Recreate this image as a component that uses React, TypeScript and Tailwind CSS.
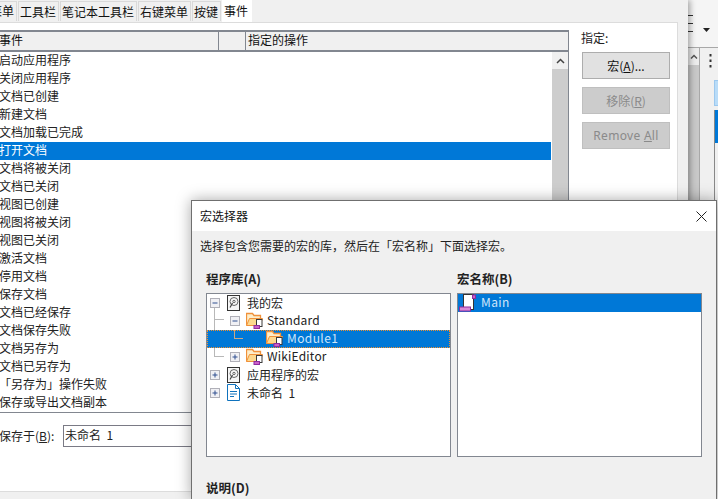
import React from 'react'

const font = "font-['Noto_Sans_CJK_SC','Noto_Sans',sans-serif]"

const events = [
  '启动应用程序',
  '关闭应用程序',
  '文档已创建',
  '新建文档',
  '文档加载已完成',
  '打开文档',
  '文档将被关闭',
  '文档已关闭',
  '视图已创建',
  '视图将被关闭',
  '视图已关闭',
  '激活文档',
  '停用文档',
  '保存文档',
  '文档已经保存',
  '文档保存失败',
  '文档另存为',
  '文档已另存为',
  '「另存为」操作失败',
  '保存或导出文档副本',
]

const Expander = ({ open }: { open: boolean }) => (
  <svg width="10" height="10" viewBox="0 0 10 10" className="shrink-0">
    <rect x="0.5" y="0.5" width="9" height="9" fill="#f0f0f4" stroke="#b0b0b8" />
    <path d={open ? 'M2.500 5h5' : 'M2.500 5h5M5 2.500v5'} stroke="#2f4f8f" />
  </svg>
)

const DiskIcon = () => (
  <svg width="13" height="16" viewBox="0 0 13 16" className="shrink-0">
    <rect x="0.5" y="0.5" width="12" height="15" fill="#f6f6f6" stroke="#333" />
    <circle cx="7" cy="6.500" r="4" fill="none" stroke="#666" />
    <circle cx="7" cy="6.500" r="1.200" fill="none" stroke="#666" />
    <path d="M5.500 8 3 12.500" stroke="#444" strokeWidth="1.200" />
  </svg>
)

const DocIcon = () => (
  <svg width="13" height="17" viewBox="0 0 13 17" className="shrink-0">
    <path d="M.5.5h8l4 4v12H.5z" fill="#fff" stroke="#0f72bd" />
    <path d="M8.500.5V4.500h4" fill="none" stroke="#0f72bd" />
    <path d="M3 7.500h7M3 10h7M3 12.500h4" stroke="#0f72bd" />
  </svg>
)

const FolderIcon = () => (
  <svg width="17" height="17" viewBox="0 0 17 17" className="shrink-0">
    <path d="M.5 13.500V1.500h6l1.500 2h6.500v3" fill="#fdeecb" stroke="#f0913a" strokeWidth="1.300" />
    <path d="M.5 13.500 3.500 6.500h13l-2.500 7z" fill="#fdd98f" stroke="#f0913a" />
    <rect x="10.500" y="7.500" width="5.500" height="7" fill="#fff" stroke="#3a3a3a" />
    <rect x="8" y="13.500" width="5.500" height="3" fill="#c95fc9" stroke="#8e2c9e" />
  </svg>
)

const ScrollIcon = () => (
  <svg width="17" height="18" viewBox="0 0 17 18" className="shrink-0">
    <rect x="4.500" y="0.500" width="10" height="15" fill="#fff" stroke="#333" />
    <rect x="13.500" y="1" width="3" height="3.500" fill="#c95fc9" stroke="#8e2c9e" />
    <rect x="0.500" y="13" width="11" height="4" fill="#d78ad7" stroke="#8e2c9e" />
  </svg>
)

const TabItem = ({ label }: { label: string }) => (
  <div className="h-[20px] mt-[1px] pl-[1px] pr-[2px] bg-[#f0f0f0] border border-[#d9d9d9] border-b-0 text-[12px] leading-[19px] text-[#111] whitespace-nowrap">
    {label}
  </div>
)

const ActionButton = ({ children, disabled }: { children: React.ReactNode; disabled?: boolean }) => (
  <div
    className={
      disabled
        ? 'w-[88px] h-[27px] flex items-center justify-center border border-[#bfbfbf] bg-[#cccccc] text-[12px] text-[#8a8a8a]'
        : 'w-[88px] h-[27px] flex items-center justify-center border border-[#adadad] bg-[#e1e1e1] text-[12px] text-[#111]'
    }
  >
    {children}
  </div>
)

export default function App() {
  return (
    <div className={`relative w-[718px] h-[499px] overflow-hidden bg-[#f0f0f0] ${font}`}>
      <div className="flex h-full">
        {/* customize window behind */}
        <div className="relative z-10 w-[688px] h-full shrink-0 bg-[#f0f0f0] shadow-[2px_0_6px_rgba(0,0,0,0.35)] flex flex-col">
          <div className="h-[22px] flex items-start gap-[1px] shrink-0 overflow-hidden">
            <div className="h-[20px] mt-[1px] w-[17px] overflow-hidden bg-[#f0f0f0] border-r border-t border-[#d9d9d9] text-[12px] leading-[18px] flex justify-end pr-[2px] text-[#111] shrink-0">
              <span className="shrink-0">菜单</span>
            </div>
            <TabItem label="工具栏" />
            <TabItem label="笔记本工具栏" />
            <TabItem label="右键菜单" />
            <TabItem label="按键" />
            <div className="h-[22px] pl-[2px] pr-[4px] bg-white text-[12px] leading-[21px] text-[#111] whitespace-nowrap">事件</div>
          </div>
          <div className="w-[678px] h-[470px] bg-white border-t border-r border-b border-[#dcdcdc] flex shrink-0">
            <div className="w-[569px] shrink-0 pt-[7px] flex flex-col">
              <div className="h-[22px] border-t-2 border-b-2 border-r border-[#828790] bg-[#f0f0f0] flex text-[12px] leading-[16px] text-[#111] shrink-0 overflow-hidden">
                <div className="w-[219px] shrink-0 border-r border-[#828790] -indent-[1px]">事件</div>
                <div className="w-[27px] shrink-0 border-r border-[#828790]" />
                <div className="pl-[2px]">指定的操作</div>
              </div>
              <div className="flex h-[360px] border-r border-[#828790] overflow-hidden shrink-0">
                <div className="w-[552px] shrink-0 pr-[1px]">
                  {events.map((name) => (
                    <div
                      key={name}
                      className={
                        name === '打开文档'
                          ? 'h-[18px] bg-[#0078d7] text-white text-[12px] leading-[16px] -indent-[1px] whitespace-nowrap'
                          : 'h-[18px] text-[#222] text-[12px] leading-[16px] -indent-[1px] whitespace-nowrap'
                      }
                    >
                      {name}
                    </div>
                  ))}
                </div>
                <div className="w-[16px] bg-[#cdcdcd] flex flex-col">
                  <div className="h-[17px] bg-[#f0f0f0] flex items-center justify-center">
                    <svg width="9" height="6" viewBox="0 0 9 6">
                      <path d="M1 5l3.500-3.500L8 5" fill="none" stroke="#444" strokeWidth="1.500" />
                    </svg>
                  </div>
                </div>
              </div>
              <div className="border-t border-[#828790] h-[1px] shrink-0" />
              <div className="flex items-center mt-[12px] text-[12px] text-[#222]">
                <span className="w-[63px] shrink-0 whitespace-nowrap -indent-[1px]">
                  保存于(<span className="underline">B</span>):
                </span>
                <div className="flex-1 h-[22px] border border-[#7a7a85] pl-[1px] leading-[18px] whitespace-pre">未命名  1</div>
              </div>
            </div>
            <div className="pl-[12px] pt-[6px] flex flex-col">
              <div className="text-[12px] leading-[18px] text-[#222] mb-[5px]">指定:</div>
              <div className="flex flex-col gap-[8px] ml-[1px]">
                <ActionButton>
                  宏(<span className="underline">A</span>)...
                </ActionButton>
                <ActionButton disabled>
                  移除(<span className="underline">R</span>)
                </ActionButton>
                <ActionButton disabled>
                  <span className="font-['Noto_Sans',sans-serif] text-[12px] tracking-[0.3px]">
                    Remove <span className="underline">A</span>ll
                  </span>
                </ActionButton>
              </div>
            </div>
          </div>
        </div>

        {/* writer window peeking out on the right */}
        <div className="flex-1 flex flex-col">
          <div className="h-[48px] bg-[#f5f5f5] border-b border-[#a8a8a8] flex items-center gap-[10px] shrink-0">
            <svg width="5" height="17" viewBox="0 0 5 17" className="mb-[1px]">
              <path d="M0 .5h5M0 8.500h5M0 16.500h5" stroke="#333" />
            </svg>
            <svg width="7" height="4" viewBox="0 0 7 4" className="mt-[13px]">
              <path d="M0 0h7L3.500 4z" fill="#222" />
            </svg>
          </div>
          <div className="flex flex-1">
            <div className="w-[12px] bg-[#c8c8c8] border-r border-[#a8a8a8] flex flex-col shrink-0">
              <div className="h-[17px] bg-[#ececec] flex items-center justify-center">
                <svg width="8" height="5" viewBox="0 0 8 5">
                  <path d="M1 4.500l3-3 3 3" fill="none" stroke="#555" strokeWidth="1.500" />
                </svg>
              </div>
            </div>
            <div className="flex-1 flex flex-col pt-[6px]">
              <div className="pl-[9px]">
                <svg width="3" height="14" viewBox="0 0 3 14" className="block">
                  <path d="M1.500 0v2.500M1.500 5.500v2.500M1.500 11v2.500" stroke="#333" strokeWidth="2" />
                </svg>
              </div>
              <div className="ml-[14px] h-[26px] mt-[12px] bg-[#b9dcf8] border border-[#9cc8ee] border-r-0" />
              <div className="ml-[14px] h-[33px] mt-[4px] bg-[#0078d7] border-l border-[#888]" />
              <div className="ml-[14px] flex-1 border-l border-[#888]" />
            </div>
          </div>
        </div>
      </div>

      {/* macro selector window, overlapping the window behind */}
      <div className="absolute z-20 left-[191px] top-[200px] w-[526px] h-[299px] bg-[#f0f0f0] border border-[#6f6f6f] border-b-0 shadow-[0_0_14px_rgba(0,0,0,0.35)] flex flex-col">
        <div className="h-[30px] bg-white flex items-center justify-between pl-[8px] pr-[9px] shrink-0">
          <span className="text-[12px] text-[#111]">宏选择器</span>
          <svg width="11" height="11" viewBox="0 0 11 11">
            <path d="M.5.500l10 10M10.500.500l-10 10" stroke="#222" />
          </svg>
        </div>
        <div className="pl-[8px] pt-[6px] text-[12px] leading-[18px] text-[#222] shrink-0">
          选择包含您需要的宏的库，然后在「宏名称」下面选择宏。
        </div>
        <div className="flex gap-[6px] pl-[14px] mt-[15px] shrink-0">
          <div className="w-[245px]">
            <div className="text-[12.5px] leading-[18px] font-bold text-[#222] mb-[5px]">程序库(A)</div>
            <div className="h-[164px] bg-white border border-[#828790] text-[12px] text-[#222]">
              <div className="relative h-[18px] flex items-center pl-[3px] pb-[1px]">
                <div className="absolute left-[7px] bottom-0 h-[4px] border-l border-[#b8b8b8]" />
                <Expander open />
                <span className="ml-[7px]"><DiskIcon /></span>
                <span className="ml-[7px]">我的宏</span>
              </div>
              <div className="relative h-[18px] flex items-center pl-[23px] pb-[1px]">
                <div className="absolute left-[7px] top-0 bottom-0 border-l border-[#b8b8b8]" />
                <div className="absolute left-[7px] top-[7px] w-[10px] border-b border-[#b8b8b8]" />
                <Expander open />
                <span className="ml-[6px]"><FolderIcon /></span>
                <span className="ml-[4px] -mt-[2px] tracking-[0.2px]">Standard</span>
              </div>
              <div className="relative h-[18px] flex items-center pl-[58px] pb-[1px] bg-[#0078d7] text-[#cfe6fa] border border-dotted border-[#f09030]">
                <div className="absolute left-[26px] -top-[1px] w-[9px] h-[9px] border-l border-b border-[#c8a888]" />
                <FolderIcon />
                <span className="ml-[4px] -mt-[2px] tracking-[0.4px]">Module1</span>
              </div>
              <div className="relative h-[18px] flex items-center pl-[23px] pb-[1px]">
                <div className="absolute left-[7px] top-0 w-[10px] h-[9px] border-l border-b border-[#b8b8b8]" />
                <Expander open={false} />
                <span className="ml-[6px]"><FolderIcon /></span>
                <span className="ml-[4px] -mt-[2px] tracking-[0.2px]">WikiEditor</span>
              </div>
              <div className="h-[18px] flex items-center pl-[3px] pb-[1px]">
                <Expander open={false} />
                <span className="ml-[7px]"><DiskIcon /></span>
                <span className="ml-[7px]">应用程序的宏</span>
              </div>
              <div className="h-[18px] flex items-center pl-[3px] pb-[1px]">
                <Expander open={false} />
                <span className="ml-[7px]"><DocIcon /></span>
                <span className="ml-[7px] whitespace-pre">未命名  1</span>
              </div>
            </div>
          </div>
          <div className="w-[245px]">
            <div className="text-[12.5px] leading-[18px] font-bold text-[#222] mb-[5px]">宏名称(B)</div>
            <div className="h-[164px] bg-white border border-[#828790]">
              <div className="h-[18px] bg-[#0078d7] flex items-center pl-[1px] gap-[5px] text-[12px] text-[#cfe6fa] tracking-[0.4px]">
                <ScrollIcon />
                <span className="-mt-[2px]">Main</span>
              </div>
            </div>
          </div>
        </div>
        <div className="pl-[14px] mt-[22px] text-[12.5px] leading-[18px] font-bold text-[#222]">说明(D)</div>
      </div>
    </div>
  )
}
